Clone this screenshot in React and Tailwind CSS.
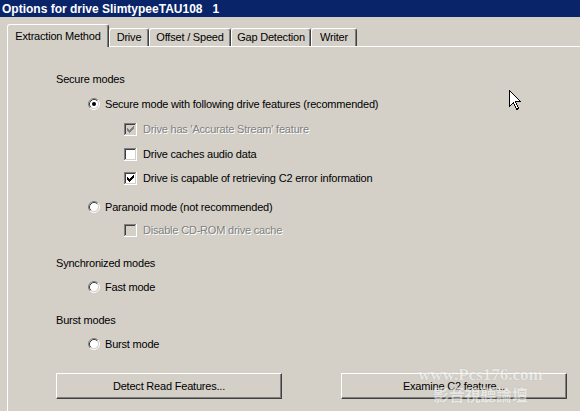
import React from "react"

const CHECK = [
  "......x",
  ".....xx",
  "x...xxx",
  "xx.xxx.",
  "xxxxx..",
  ".xxx...",
  "..x....",
]

const checkPath = CHECK.flatMap((row, y) =>
  row.split("").map((c, x) => (c === "x" ? `M${x + 3} ${y + 3}h1v1h-1z` : ""))
).join("")

function Radio({ checked }) {
  return (
    <svg width="12" height="12" viewBox="0 0 12 12" className="shrink-0">
      <circle cx="6" cy="6" r="4.5" fill="#fff" />
      <path d="M2.11 9.89A5.5 5.5 0 0 1 9.89 2.11" fill="none" stroke="#808080" />
      <path d="M9.89 2.11A5.5 5.5 0 0 1 2.11 9.89" fill="none" stroke="#fff" />
      <path d="M2.82 9.18A4.5 4.5 0 0 1 9.18 2.82" fill="none" stroke="#404040" />
      <path d="M9.18 2.82A4.5 4.5 0 0 1 2.82 9.18" fill="none" stroke="#d4d0c8" />
      {checked && <circle cx="6" cy="6" r="2" fill="#000" />}
    </svg>
  )
}

function Checkbox({ checked, disabled }) {
  return (
    <svg width="13" height="13" viewBox="0 0 13 13" className="shrink-0" shapeRendering="crispEdges">
      <rect x="0" y="0" width="13" height="13" fill="#fff" />
      <rect x="0" y="0" width="12" height="12" fill="#808080" />
      <rect x="1" y="1" width="11" height="11" fill="#d4d0c8" />
      <rect x="1" y="1" width="10" height="10" fill="#404040" />
      <rect x="2" y="2" width="9" height="9" fill={disabled ? "#d4d0c8" : "#fff"} />
      {checked && <path d={checkPath} fill={disabled ? "#808080" : "#000"} />}
    </svg>
  )
}

function Label({ children, disabled }) {
  return (
    <span className={disabled ? "text-[#808080] [text-shadow:1px_1px_0_#fff]" : "text-black"}>
      {children}
    </span>
  )
}

function RadioRow({ checked, children, className }) {
  return (
    <div className={"flex h-[16px] items-center gap-[5px] pl-[32px] " + (className || "")}>
      <Radio checked={checked} />
      <Label>{children}</Label>
    </div>
  )
}

function CheckRow({ checked, disabled, children, className }) {
  return (
    <div className={"flex h-[16px] items-center gap-[6px] pl-[68px] " + (className || "")}>
      <Checkbox checked={checked} disabled={disabled} />
      <Label disabled={disabled}>{children}</Label>
    </div>
  )
}

function Heading({ children, className }) {
  return <div className={"flex h-[16px] items-center " + (className || "")}>{children}</div>
}

function Tab({ label, width, active }) {
  return (
    <div
      className={
        "flex items-center justify-center rounded-t-[3px] border-l border-t border-r border-l-white border-t-white border-r-[#404040] shadow-[inset_-1px_0_0_#808080] bg-[#d4d0c8] " +
        (active ? "relative z-10 -mb-px h-[23px]" : "h-[18px]")
      }
      style={{ width }}
    >
      {label}
    </div>
  )
}

function Button({ children }) {
  return (
    <button className="flex h-[26px] w-[226px] items-center justify-center border border-t-white border-l-white border-r-[#404040] border-b-[#404040] bg-[#d4d0c8] text-black shadow-[inset_-1px_-1px_0_#808080]">
      {children}
    </button>
  )
}

export default function App() {
  return (
    <div className="relative h-[411px] w-[580px] overflow-hidden bg-[#d4d0c8] font-['Liberation_Sans',Arial,sans-serif] text-[11px] leading-none tracking-[-0.2px] text-black">
      {/* title bar */}
      <div className="flex h-[17px] items-center whitespace-pre bg-[#0a246a] pl-[2px] text-[12px] font-bold tracking-normal text-white">
        Options for drive SlimtypeeTAU108   1
      </div>

      {/* tabs */}
      <div className="mt-[7px] flex h-[22px] items-end pl-[7px]">
        <Tab label="Extraction Method" width={102} active />
        <Tab label="Drive" width={40} />
        <Tab label="Offset / Speed" width={82} />
        <Tab label="Gap Detection" width={80} />
        <Tab label="Writer" width={46} />
      </div>

      {/* panel */}
      <div className="ml-[7px] flex h-[400px] flex-col border-l border-t border-white pl-[48px] pt-[24px]">
        <Heading>Secure modes</Heading>
        <RadioRow checked className="mt-[9px]">
          Secure mode with following drive features (recommended)
        </RadioRow>
        <CheckRow checked disabled className="mt-[9px]">
          Drive has 'Accurate Stream' feature
        </CheckRow>
        <CheckRow className="mt-[9px]">Drive caches audio data</CheckRow>
        <CheckRow checked className="mt-[8px]">
          Drive is capable of retrieving C2 error information
        </CheckRow>
        <RadioRow className="mt-[13px]">Paranoid mode (not recommended)</RadioRow>
        <CheckRow disabled className="mt-[7px]">
          Disable CD-ROM drive cache
        </CheckRow>

        <Heading className="mt-[17px]">Synchronized modes</Heading>
        <RadioRow className="mt-[8px]">Fast mode</RadioRow>

        <Heading className="mt-[17px]">Burst modes</Heading>
        <RadioRow className="mt-[8px]">Burst mode</RadioRow>

        <div className="mt-[21px] flex gap-[59px]">
          <Button>Detect Read Features...</Button>
          <Button>Examine C2 feature...</Button>
        </div>
      </div>

      {/* watermark */}
      <div className="pointer-events-none absolute left-[418px] top-[366px] flex flex-col items-center text-white opacity-50 [text-shadow:0_0_1px_#888]">
        <span className="font-['Liberation_Serif',serif] text-[17px] font-bold tracking-normal">www.Pcs176.com</span>
        <span className="mt-[3px] font-['Noto_Sans_CJK_TC',sans-serif] text-[16px] font-bold">影音視聽論壇</span>
      </div>

      {/* mouse cursor */}
      <svg className="pointer-events-none absolute left-[509px] top-[90px]" width="13" height="21" viewBox="0 0 13 21" shapeRendering="crispEdges">
        <path d="M0.5 0.5V16.5L4.5 12.5L7.5 19.5L9.5 18.5L6.5 11.5H11.5Z" fill="#fff" stroke="#000" />
      </svg>
    </div>
  )
}
